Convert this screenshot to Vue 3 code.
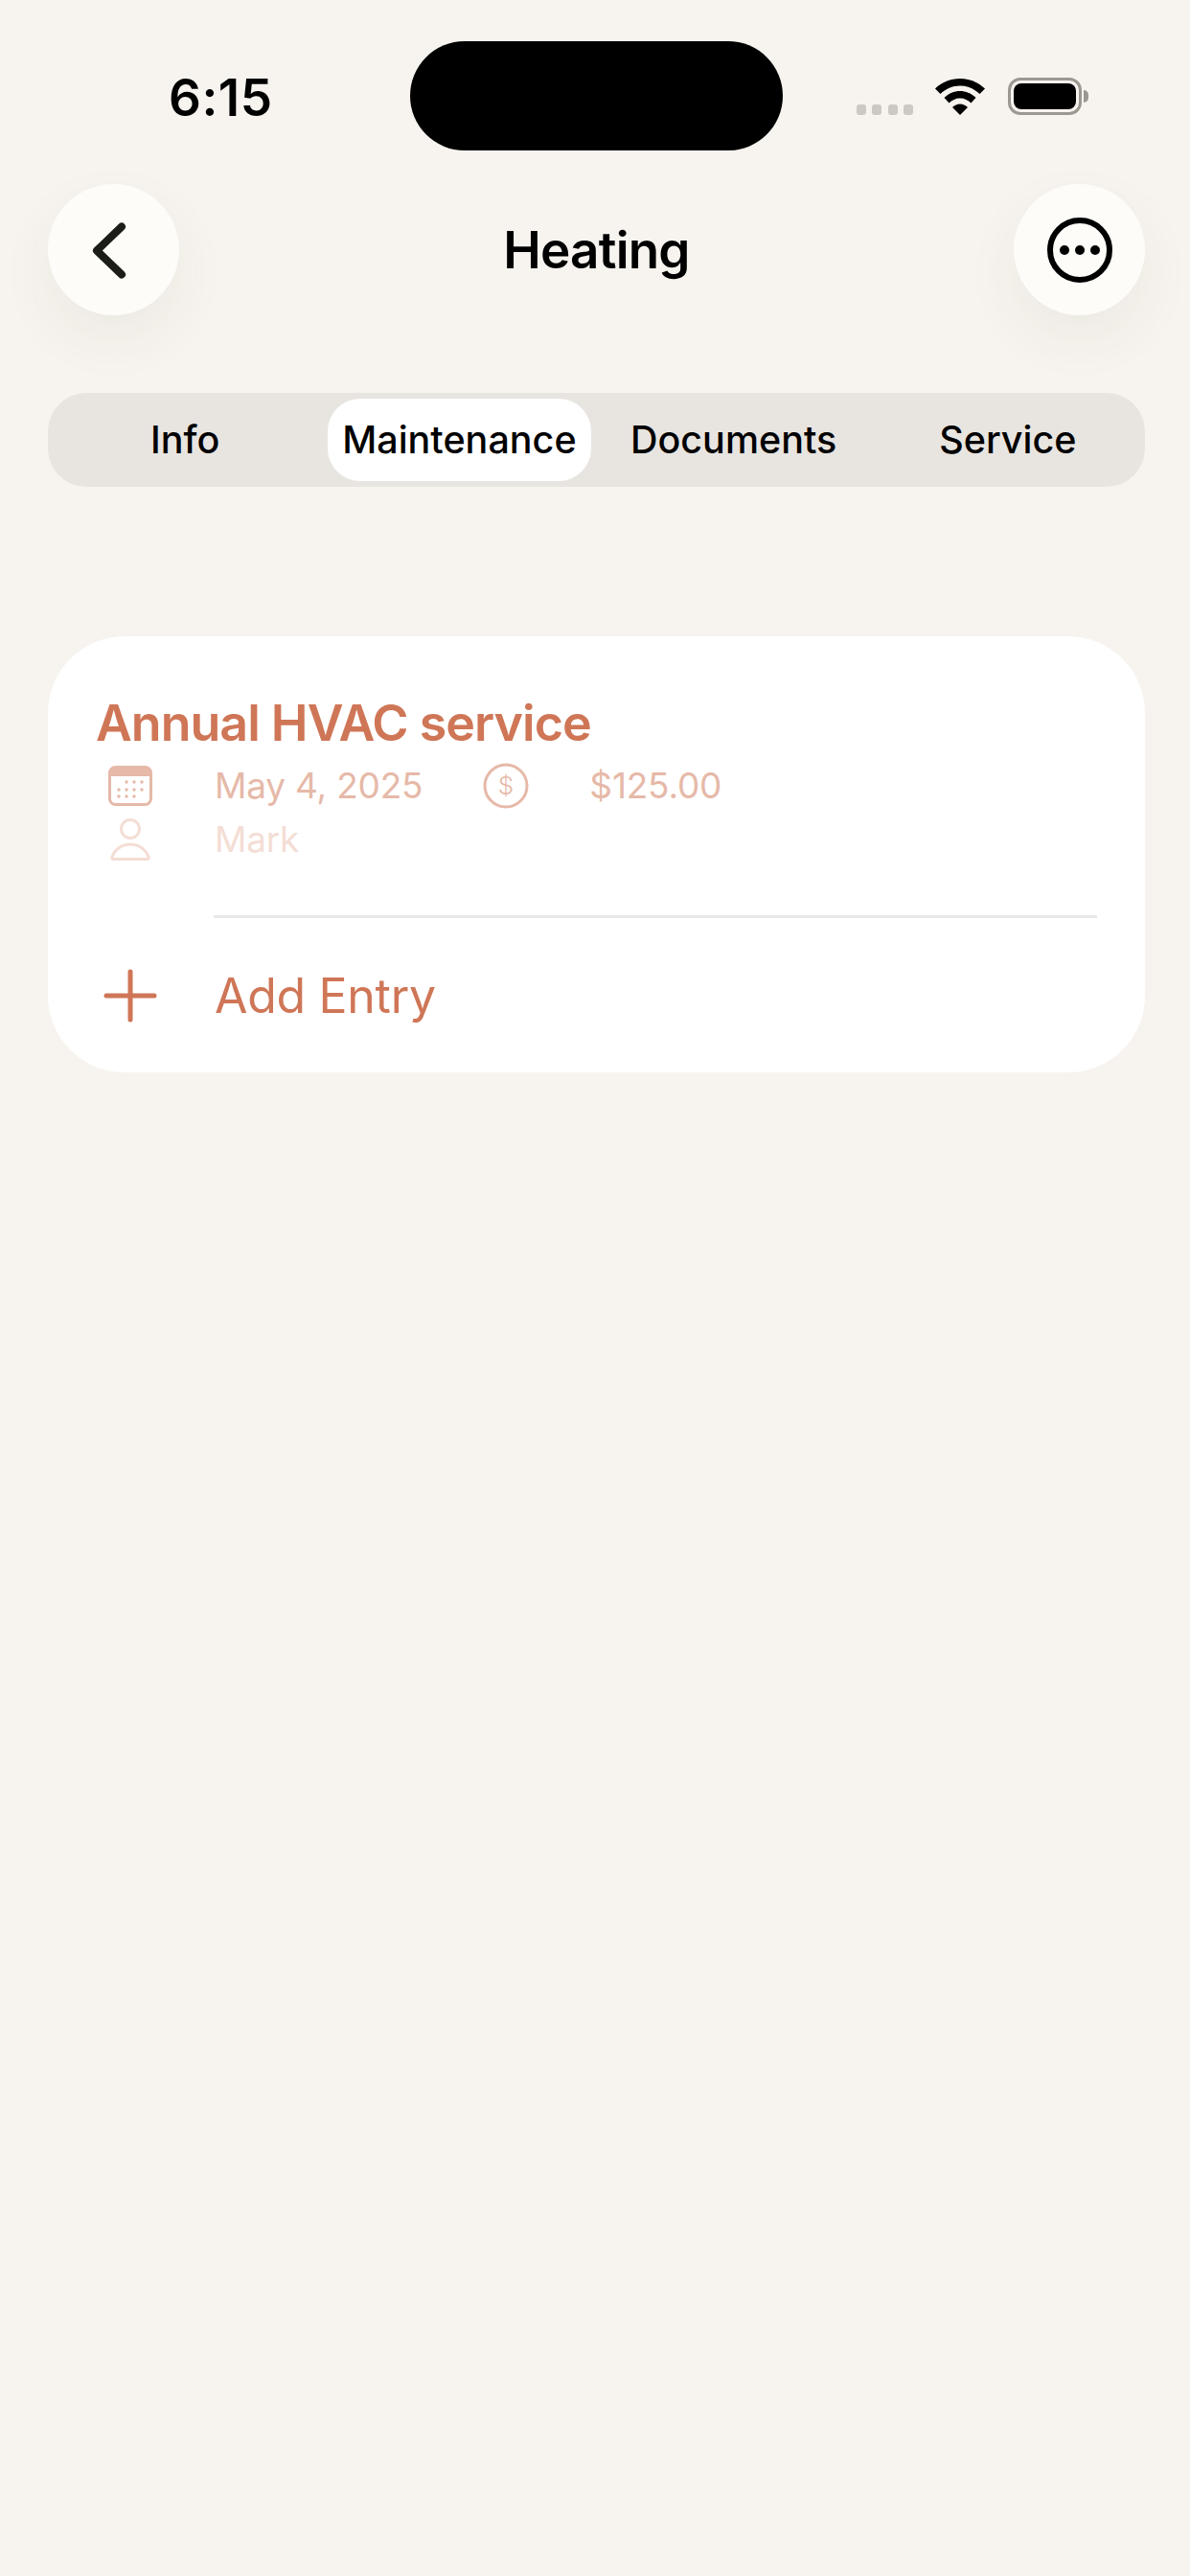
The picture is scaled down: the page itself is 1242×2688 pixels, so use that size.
<template>
  <div class="screen">
    <!-- Status bar -->
    <div class="status-bar">
      <span class="clock">6:15</span>
      <div class="status-icons">
        <div class="signal">
          <span v-for="n in 4" :key="n"></span>
        </div>
        <svg class="wifi" width="52" height="38" viewBox="0 0 52 38">
          <path d="M26 0C16 0 7 3.800 0 10.500L5.500 16C11 11 18 7.600 26 7.600S41 11 46.500 16L52 10.500C45 3.800 36 0 26 0Z" />
          <path d="M26 13C20 13 14 15.500 9.500 20L14.500 25.500C17.500 22.500 21.500 20.500 26 20.500S34.500 22.500 37.500 25.500L42.500 20C38 15.500 32 13 26 13Z" />
          <path d="M26 26.500C23 26.500 20.500 27.800 18 30L26 38L34 30C31.500 27.800 29 26.500 26 26.500Z" />
        </svg>
        <div class="battery">
          <div class="battery-body"><div class="battery-level"></div></div>
          <div class="battery-nub"></div>
        </div>
      </div>
    </div>
    <div class="island"></div>

    <!-- Nav -->
    <div class="nav">
      <button class="round-btn">
        <svg width="50" height="70" viewBox="0 0 50 70">
          <path d="M33 10.500L7 35.500L33 60.500" fill="none" stroke="#1c1c18" stroke-width="8" stroke-linecap="round" stroke-linejoin="round" />
        </svg>
      </button>
      <h1>Heating</h1>
      <button class="round-btn">
        <svg width="70" height="70" viewBox="0 0 70 70">
          <circle cx="35" cy="35" r="31" fill="none" stroke="#000" stroke-width="6" />
          <circle cx="19" cy="35" r="5" />
          <circle cx="35" cy="35" r="5" />
          <circle cx="51" cy="35" r="5" />
        </svg>
      </button>
    </div>

    <!-- Tabs -->
    <div class="tabs">
      <div
        v-for="tab in tabs"
        :key="tab"
        :class="['tab', { active: tab === activeTab }]"
      >
        {{ tab }}
      </div>
    </div>

    <!-- Entries card -->
    <div class="card">
      <div class="entry">
        <div class="entry-title">Annual HVAC service</div>
        <div class="meta-row date-row">
          <div class="icon-slot">
            <svg width="46" height="42" viewBox="0 0 46 42">
              <rect x="1.500" y="1.500" width="43" height="39" rx="6" fill="none" stroke="currentColor" stroke-width="3" />
              <path d="M1.500 11V7a5.500 5.500 0 0 1 5.500-5.500h32a5.500 5.500 0 0 1 5.500 5.500v4Z" fill="currentColor" />
              <circle v-for="d in calendarDots" :key="d.x + '-' + d.y" :cx="d.x" :cy="d.y" r="1.700" fill="currentColor" />
            </svg>
          </div>
          <span class="meta-text">May 4, 2025</span>
          <svg class="dollar" width="48" height="48" viewBox="0 0 48 48">
            <circle cx="24" cy="24" r="22" fill="none" stroke="currentColor" stroke-width="3" />
            <text x="24" y="33" text-anchor="middle" font-size="26" font-weight="300" fill="currentColor">$</text>
          </svg>
          <span class="meta-text">$125.00</span>
        </div>
        <div class="meta-row person-row">
          <div class="icon-slot">
            <svg width="42" height="44" viewBox="0 0 42 44">
              <circle cx="21" cy="11" r="9.500" fill="none" stroke="currentColor" stroke-width="3" />
              <path d="M3.500 42.500H38.500C39.800 42.500 40.600 41.500 40 40.200C37 32 29.500 27 21 27S5 32 2 40.200C1.400 41.500 2.200 42.500 3.500 42.500Z" fill="none" stroke="currentColor" stroke-width="3" stroke-linejoin="round" />
            </svg>
          </div>
          <span class="meta-text">Mark</span>
        </div>
      </div>
      <div class="divider"></div>
      <div class="add-row">
        <div class="icon-slot">
          <svg width="56" height="56" viewBox="0 0 56 56">
            <path d="M28 3V53M3 28H53" fill="none" stroke="#cf7657" stroke-width="5" stroke-linecap="round" />
          </svg>
        </div>
        <span class="add-label">Add Entry</span>
      </div>
    </div>
  </div>
</template>

<script setup>
const tabs = ['Info', 'Maintenance', 'Documents', 'Service']
const activeTab = 'Maintenance'

// rows of the little calendar glyph
const calendarDots = [
  { x: 19, y: 17 }, { x: 27, y: 17 }, { x: 35, y: 17 },
  { x: 11, y: 25 }, { x: 19, y: 25 }, { x: 27, y: 25 }, { x: 35, y: 25 },
  { x: 11, y: 32 }, { x: 19, y: 32 }, { x: 27, y: 32 }
]
</script>

<style>
html, body {
  margin: 0;
  background: #f7f4ef;
}
</style>

<style scoped>
.screen {
  position: relative;
  width: 1242px;
  height: 2688px;
  padding: 0 47px 0 50px;
  box-sizing: border-box;
  background: #f7f4ef;
  font-family: Inter, "Liberation Sans", sans-serif;
  color: #000;
  overflow: hidden;
}

.status-bar {
  height: 192px;
  display: flex;
  align-items: flex-start;
  justify-content: space-between;
}

.clock {
  margin: 70px 0 0 126px;
  font-size: 53px;
  line-height: 64px;
  font-weight: 600;
  letter-spacing: 0.500px;
}

.island {
  position: absolute;
  left: 428px;
  top: 43px;
  width: 389px;
  height: 114px;
  border-radius: 57px;
  background: #000;
}

.status-icons {
  display: flex;
  align-items: flex-end;
  margin: 81px 0 0 0;
  height: 39px;
  padding-right: 59px;
}

.signal {
  display: flex;
  gap: 6.500px;
  margin-right: 23px;
}

.signal span {
  width: 10px;
  height: 11px;
  border-radius: 3px;
  background: #ccc8c3;
}

.wifi {
  margin-right: 24px;
  fill: #000;
}

.battery {
  display: flex;
  align-items: center;
  gap: 2px;
}

.battery-body {
  width: 77px;
  height: 39px;
  box-sizing: border-box;
  border: 3px solid #9b9791;
  border-radius: 13px;
  padding: 3px;
}

.battery-level {
  height: 100%;
  border-radius: 8px;
  background: #000;
}

.battery-nub {
  width: 5px;
  height: 13px;
  border-radius: 0 6px 6px 0;
  background: #9b9791;
}

.nav {
  display: flex;
  align-items: center;
  justify-content: space-between;
  height: 137px;
}

.nav h1 {
  margin: 0;
  font-size: 53px;
  line-height: 64px;
  font-weight: 600;
  letter-spacing: -0.800px;
}

.round-btn {
  width: 137px;
  height: 137px;
  padding: 0;
  border: none;
  border-radius: 50%;
  background: #fdfcf8;
  box-shadow: 0 24px 60px rgba(60, 50, 40, 0.06);
  display: flex;
  align-items: center;
  justify-content: center;
}

.tabs {
  margin-top: 81px;
  height: 98px;
  box-sizing: border-box;
  padding: 6px 0;
  border-radius: 40px;
  background: #e8e5e1;
  display: grid;
  grid-template-columns: repeat(4, 1fr);
}

.tab {
  margin: 0 6px;
  border-radius: 34px;
  display: flex;
  align-items: center;
  justify-content: center;
  font-size: 39.500px;
  font-weight: 500;
  white-space: nowrap;
}

.tab.active {
  background: #fff;
}

.card {
  margin-top: 156px;
  height: 455px;
  box-sizing: border-box;
  padding-top: 59px;
  border-radius: 80px;
  background: #fff;
  color: #cf7657;
}

.entry {
  padding-left: 50px;
}

.entry-title {
  font-size: 52px;
  line-height: 64px;
  font-weight: 600;
  letter-spacing: -1px;
}

.meta-row {
  display: flex;
  align-items: center;
  height: 44px;
}

.date-row {
  margin-top: 11px;
  color: #e6b9a8;
}

.person-row {
  margin-top: 12px;
  color: #f4ddd5;
}

.icon-slot {
  flex: none;
  width: 72px;
  margin-right: 52px;
  display: flex;
  justify-content: center;
}

.meta-text {
  font-size: 37px;
  line-height: 44px;
  letter-spacing: -0.200px;
}

.dollar {
  flex: none;
  margin: 0 63px 0 63px;
}

.dollar text {
  font-family: Inter, "Liberation Sans", sans-serif;
}

.divider {
  height: 3px;
  margin: 57px 50px 0 173px;
  background: #e8e8e8;
}

.add-row {
  display: flex;
  align-items: center;
  height: 161px;
  padding-left: 50px;
}

.add-label {
  font-size: 50px;
  line-height: 60px;
  letter-spacing: -0.300px;
  color: #cf7657;
}
</style>
